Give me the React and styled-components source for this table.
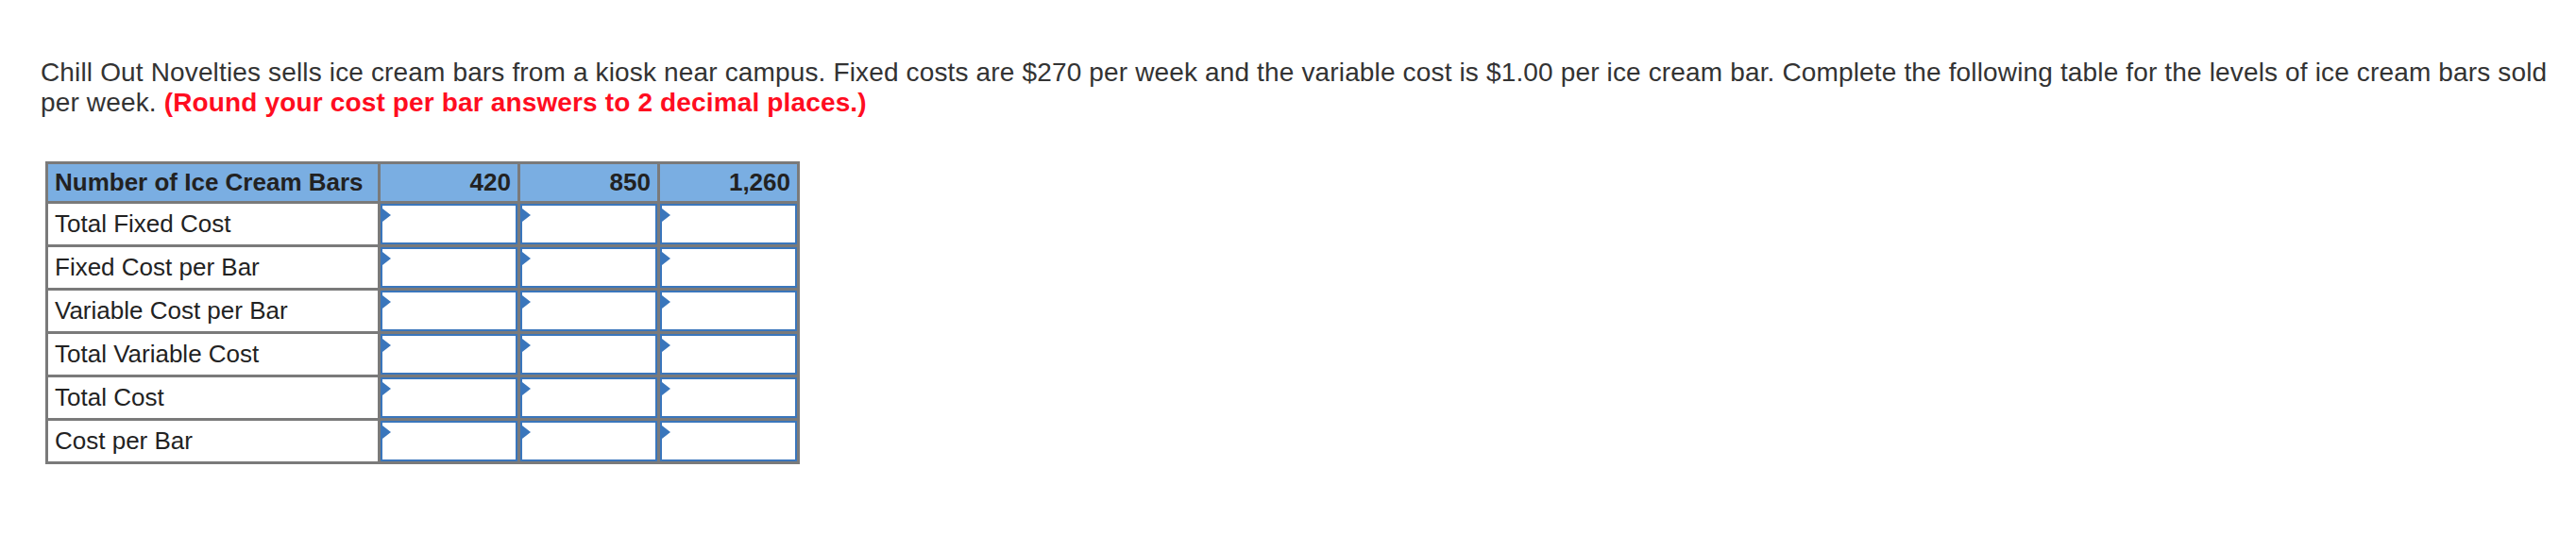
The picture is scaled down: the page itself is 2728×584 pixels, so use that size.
import React from "react";
import styled, { createGlobalStyle } from "styled-components";

const GlobalStyle = createGlobalStyle`
    body {
        margin: 0;
        background: #ffffff;
        font-family: "Liberation Sans", Arial, sans-serif;
        color: #333333;
    }
`;

const columns = ["420", "850", "1,260"];
const rows = [
    "Total Fixed Cost",
    "Fixed Cost per Bar",
    "Variable Cost per Bar",
    "Total Variable Cost",
    "Total Cost",
    "Cost per Bar",
];

export default function App() {
    return (
        <React.Fragment>
            <GlobalStyle />
            <Page>
                <Question>
                    Chill Out Novelties sells ice cream bars from a kiosk near campus. Fixed costs
                    are $270 per week and the variable cost is $1.00 per ice cream bar. Complete the
                    following table for the levels of ice cream bars sold per week.{" "}
                    <Hint>(Round your cost per bar answers to 2 decimal places.)</Hint>
                </Question>
                <CostTable>
                    <thead>
                        <tr>
                            <HeadCell>Number of Ice Cream Bars</HeadCell>
                            {columns.map((col) => (
                                <HeadCell key={col} $numeric>
                                    {col}
                                </HeadCell>
                            ))}
                        </tr>
                    </thead>
                    <tbody>
                        {rows.map((row) => (
                            <tr key={row}>
                                <LabelCell>{row}</LabelCell>
                                {columns.map((col) => (
                                    <InputCell key={col}>
                                        <AnswerBox>
                                            <Flag />
                                        </AnswerBox>
                                    </InputCell>
                                ))}
                            </tr>
                        ))}
                    </tbody>
                </CostTable>
            </Page>
        </React.Fragment>
    );
}

const Page = styled.div`
    padding: 61px 0 0 43px;
`;
const Question = styled.p`
    margin: 0;
    width: 2680px;
    font-size: 28px;
    letter-spacing: 0.15px;
    line-height: 32px;
    color: #333333;
`;
const Hint = styled.strong`
    color: #ff0d1f;
    font-weight: bold;
`;
const CostTable = styled.table`
    margin: 46px 0 0 5px;
    border-collapse: collapse;
    border: 3px solid #7a7a7a;
    font-size: 26px;
    color: #222222;
    table-layout: fixed;
`;
const HeadCell = styled.th`
    background: #7aaee2;
    border: 3px solid #7a7a7a;
    height: 42px;
    padding: 0 7px;
    text-align: ${(props) => (props.$numeric ? "right" : "left")};
    width: ${(props) => (props.$numeric ? "148px" : "352px")};
    font-weight: bold;
    box-sizing: border-box;
`;
const LabelCell = styled.td`
    border: 3px solid #7a7a7a;
    height: 43px;
    padding: 0 7px;
    text-align: left;
`;
const InputCell = styled.td`
    border: 3px solid #7a7a7a;
    padding: 0;
    height: 43px;
`;
const AnswerBox = styled.div`
    position: relative;
    height: 43px;
    border: 2px solid #3a76bc;
    box-sizing: border-box;
    background: #ffffff;
`;
const Flag = styled.span`
    position: absolute;
    left: 0;
    top: 3px;
    width: 0;
    height: 0;
    border-top: 7px solid transparent;
    border-bottom: 7px solid transparent;
    border-left: 9px solid #3a76bc;
`;
